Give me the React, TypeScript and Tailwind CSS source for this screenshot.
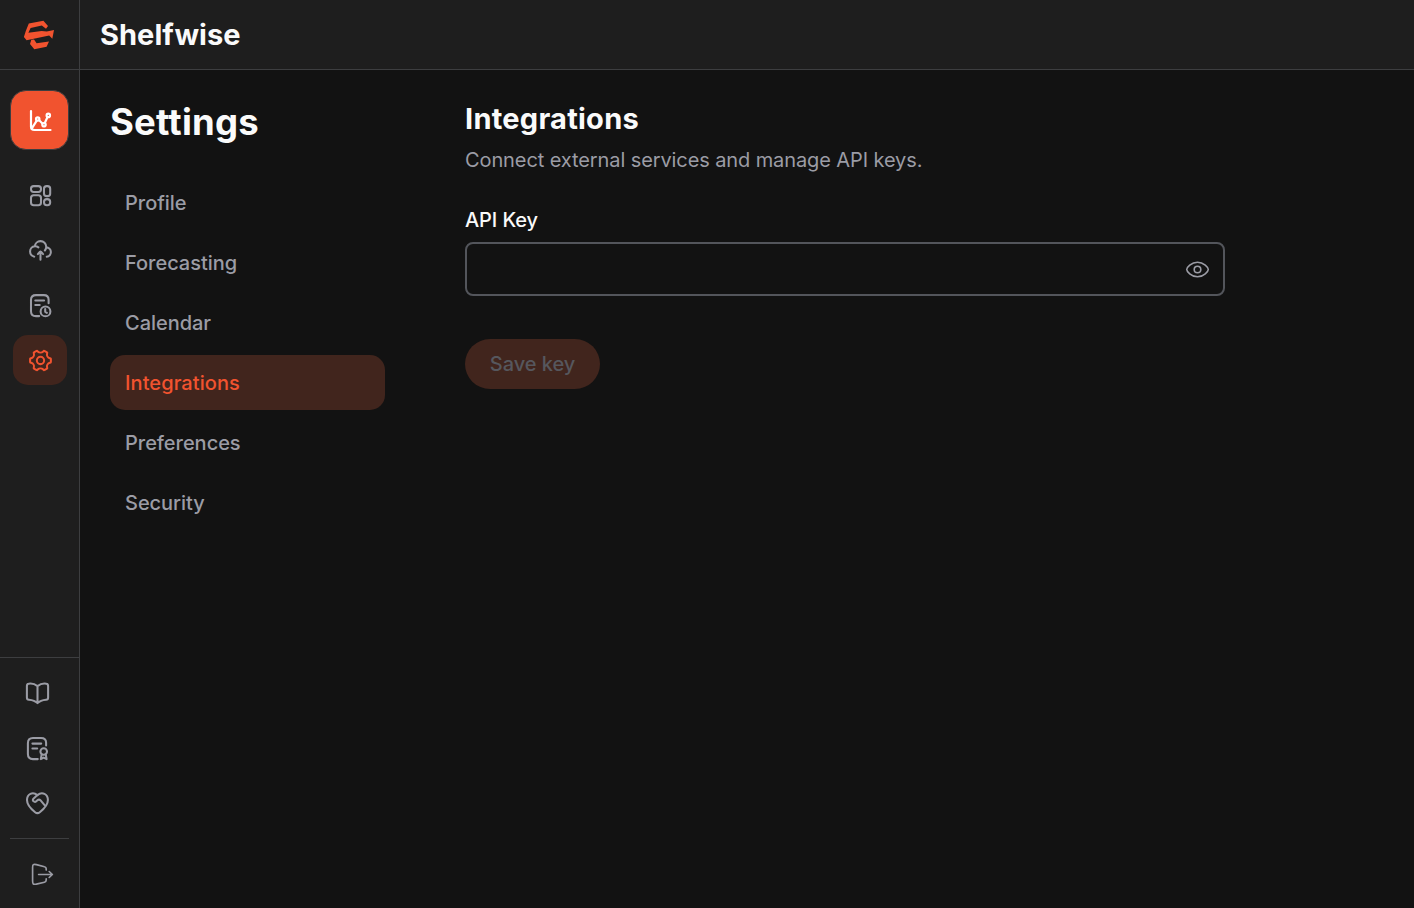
import type { ReactNode } from "react";

function Icon({ children, className = "", sw = 2.05 }: { children: ReactNode; className?: string; sw?: number }) {
  return (
    <svg viewBox="0 0 30 30" className={`size-[30px] ${className}`} fill="none" stroke="currentColor" strokeWidth={sw} strokeLinecap="round" strokeLinejoin="round">
      {children}
    </svg>
  );
}

const Logo = () => (
  <svg viewBox="0 0 34 34" className="size-[34px]" fill="#f1532f">
    <path d="M7.8 5.6 22.4 2.8 27 7.9 25 10.8 20.8 7.6 9.6 9.9 7.4 14.8 20.6 13 25.8 13.4 33 12 31.3 20.7 28.2 17.6 5.6 22.3 2.9 19 4.8 13Z" />
    <path d="M10.3 21.8 13 21.5 15.6 25.2 28 23.4 25.6 28.8 13.3 31.2 9 26Z" />
  </svg>
);

const Chart = () => (
  <Icon className="text-white" sw={2.2}>
    <path d="M6 6v15.5C6 24 7 25 9.5 25h16M7 23.2l4.6-7.4M14.2 15.3l3.2 3.2M19.8 18l2.6-5.8" />
    <circle cx="12.7" cy="14" r="1.7" /><circle cx="19" cy="19.7" r="1.7" /><circle cx="23.3" cy="10.4" r="1.7" />
  </Icon>
);
const Dashboard = () => (
  <Icon>
    <rect x="6" y="6.1" width="10" height="5.8" rx="2.6" /><rect x="6" y="15.2" width="10" height="10" rx="2.7" />
    <rect x="19" y="6.1" width="6.2" height="10" rx="2.7" /><rect x="19" y="19.1" width="6.2" height="6.1" rx="2.9" />
  </Icon>
);
const Cloud = () => (
  <Icon>
    <g transform="translate(3 3) scale(1.04)" strokeWidth="1.95">
      <path d="M17.478 9.011h.022c2.485 0 4.5 2.018 4.5 4.508 0 2.321-1.75 4.232-4 4.481m-.522-8.989q.022-.248.022-.501C17.5 5.467 15.038 3 12 3 9.123 3 6.762 5.213 6.52 8.032m10.958.979a5.5 5.5 0 0 1-1.235 3.006M6.52 8.032A5 5 0 0 0 2 13.018a5.01 5.01 0 0 0 4 4.91M6.52 8.032q.237-.023.48-.023c1.126 0 2.165.373 3 1.002" />
      <path d="M12 13v8m0-8c-.7 0-2.008 1.994-2.5 2.5M12 13c.7 0 2.008 1.994 2.5 2.5" />
    </g>
  </Icon>
);
const Report = () => (
  <Icon>
    <path d="M14.2 26.1H11C7.5 26.1 6 24.7 6 21.2V9.8C6 6.3 7.5 5.1 11 5.1h7.8c3.5 0 4.8 1.4 4.8 4.7v3.5M10.3 10.4h8.8M10.3 14.9h4.4" />
    <circle cx="20.5" cy="21.4" r="4.9" /><path d="M20.2 19v2.8l1.7 1" />
  </Icon>
);
const Gear = () => (
  <Icon className="text-[#f1532f]">
    <g transform="translate(3 3) scale(1.04)" strokeWidth="1.95">
      <path d="M21.011 14.097c.522-.141.783-.212.886-.346.103-.135.103-.351.103-.784v-1.934c0-.433 0-.649-.103-.784-.103-.134-.364-.205-.886-.345-1.95-.526-3.171-2.565-2.668-4.503.139-.533.208-.799.142-.956-.066-.156-.256-.264-.635-.479l-1.725-.979c-.372-.212-.558-.317-.725-.295-.167.023-.356.211-.733.587-1.459 1.455-3.873 1.455-5.333 0-.377-.376-.565-.564-.732-.587-.167-.022-.353.083-.725.295l-1.725.979c-.38.215-.569.323-.635.479-.066.157.003.423.141.956.503 1.938-.718 3.977-2.669 4.503-.522.14-.783.211-.886.345C2 10.384 2 10.6 2 11.033v1.934c0 .433 0 .649.103.784.103.134.364.205.886.346 1.95.526 3.171 2.565 2.668 4.502-.139.533-.208.8-.142.956.066.156.256.264.635.479l1.725.979c.372.212.558.317.725.295.167-.023.356-.211.733-.587 1.46-1.457 3.876-1.457 5.336 0 .377.376.565.564.732.587.167.022.354-.084.726-.295l1.724-.979c.38-.215.57-.323.636-.479.066-.156-.003-.423-.142-.956-.504-1.937.716-3.976 2.666-4.502Z" />
      <circle cx="12" cy="12" r="3.5" />
    </g>
  </Icon>
);
const Book = () => (
  <Icon>
    <path d="M15.5 8.1v17M15.5 8.1C12.8 5.9 9.1 5.2 6.5 5.7 5.2 5.9 4.9 6.6 4.9 8v11.4c0 1.6.5 2.2 2 2.3 3.4.3 6.5 1.3 8.6 3.4 2.1-2.1 5.2-3.1 8.6-3.4 1.5-.1 2-.7 2-2.3V8c0-1.4-.3-2.1-1.6-2.3-2.6-.5-6.3.2-9 2.4Z" />
  </Icon>
);
const License = () => (
  <Icon>
    <path d="M15.8 26.1H11c-3.8 0-5.1-1.4-5.1-5.1V10.2C5.9 6.5 7.2 5 11 5h8c3.7 0 5.1 1.5 5.1 4.8v2.7M10.4 10.6h8.8M10.4 15.5h4.8" />
    <circle cx="21.7" cy="18.5" r="3.3" /><path d="M19.7 21.3l-.9 4.8 2.9-1.5 2.9 1.5-.9-4.8" />
  </Icon>
);
const Heart = () => (
  <Icon>
    <path d="M15.4 7.1C10.6 3.3 5 6.2 5 12c0 5.6 4.3 9.2 8.1 12.2 1.9 1.5 2.8 1.5 4.7 0 3.8-3 8.1-6.6 8.1-12.2 0-5.8-5.6-8.7-10.5-4.9Z" />
    <path d="m15.4 7.1-4 3.7c-.8.8-.7 1.9.1 2.5.9.7 2 .7 2.8 0l1.1-1c1.1-1 2.3-.8 3.2.1l4.4 5.2" />
  </Icon>
);
const Exit = () => (
  <Icon sw={1.65}>
    <path d="M21.2 11.1V9.7c0-1.3-.4-1.7-1.7-2l-8.1-2.1C8.3 4.9 7.6 5.4 7.6 8.5v13.6c0 3.1.7 3.6 3.7 3l8.2-1.9c1.3-.3 1.7-.8 1.7-2.1v-1.4M13.6 15.5h13.8m0 0-3.2-3m3.2 3-3.2 3" />
  </Icon>
);
const Eye = () => (
  <Icon sw={1.6}>
    <path d="M4.7 15.5c0-1.7 4.5-7.3 10.8-7.3s10.8 5.6 10.8 7.3-4.5 7.3-10.8 7.3S4.7 17.2 4.7 15.5Z" />
    <circle cx="15.5" cy="15.5" r="3.3" />
  </Icon>
);

const links = [
  { label: "Dashboard", icon: <Dashboard /> },
  { label: "Upload", icon: <Cloud /> },
  { label: "Reports", icon: <Report /> },
  { label: "Settings", icon: <Gear />, active: true },
];
const tabs = ["Profile", "Forecasting", "Calendar", "Integrations", "Preferences", "Security"];

export default function App() {
  return (
    <div className="flex h-screen w-full overflow-hidden bg-[#121212] font-['Inter',sans-serif] text-[20px] text-[#9b9ca5]">
      <aside className="flex w-20 shrink-0 flex-col border-r border-[#3d3e40] bg-[#1e1e1e]">
        <div className="flex h-[70px] shrink-0 items-center border-b border-[#3d3e40] pl-[21px]"><Logo /></div>
        <button aria-label="Forecast" className="mt-5 ml-[10px] flex h-[60px] w-[59px] shrink-0 items-center justify-center rounded-[16px] border border-[#3d3e40] bg-[#f1532f]"><Chart /></button>
        <nav className="mt-5 ml-[13px] flex w-[54px] flex-col gap-[5px]">
          {links.map((l) => (
            <a key={l.label} aria-label={l.label} className={`flex h-[50px] items-center justify-center rounded-[15px] ${l.active ? "bg-[#41251d]" : ""}`}>{l.icon}</a>
          ))}
        </nav>
        <div className="mt-auto flex h-[251px] shrink-0 flex-col border-t border-[#3d3e40] pt-5">
          <div className="flex flex-col gap-[25px] pl-[22px]"><Book /><License /><Heart /></div>
          <div className="mx-[10px] mt-5 border-t border-[#3d3e40]" />
          <div className="mt-5 pl-[25px]"><Exit /></div>
        </div>
      </aside>
      <div className="flex flex-1 flex-col">
        <header className="flex h-[70px] shrink-0 items-center border-b border-[#3d3e40] bg-[#1e1e1e] pl-5">
          <h1 className="text-[29px] leading-[40px] font-bold tracking-[0.02px] text-[#fafafa]">Shelfwise</h1>
        </header>
        <main className="flex pt-[30px] pl-[30px]">
          <div className="w-[275px]">
            <h2 className="text-[36.5px] leading-[45px] font-bold tracking-[0.2px] text-[#fafafa]">Settings</h2>
            <nav className="mt-[30px] flex flex-col gap-[5px]">
              {tabs.map((t) => (
                <a key={t} className={`flex h-[55px] items-center rounded-[15px] px-[15px] font-medium ${t === "Integrations" ? "bg-[#41251d] tracking-[0.08px] text-[#f1532f]" : "tracking-[-0.03px]"}`}>{t}</a>
              ))}
            </nav>
          </div>
          <section className="ml-20 w-[760px]">
            <h3 className="text-[29px] leading-[38px] font-bold tracking-[0.25px] text-[#fafafa]">Integrations</h3>
            <p className="mt-[7px] leading-[30px] tracking-[-0.1px]">Connect external services and manage API keys.</p>
            <label className="mt-[30px] block leading-[30px] font-medium tracking-[-0.1px] text-[#fafafa]">API Key</label>
            <div className="mt-[7px] flex h-[54px] items-center justify-end rounded-[8px] border-2 border-[#53555b] pr-[11px]"><Eye /></div>
            <button className="mt-[43px] flex h-[50px] w-[135px] items-center justify-center rounded-full bg-[#41251d] font-medium tracking-[-0.05px] text-[#56575d]">Save key</button>
          </section>
        </main>
      </div>
    </div>
  );
}
